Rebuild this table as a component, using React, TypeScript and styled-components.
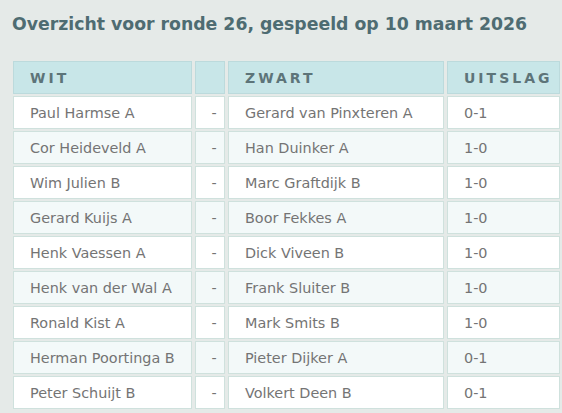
import React, { FC } from 'react'
import styled, { createGlobalStyle } from 'styled-components'

const GlobalStyle = createGlobalStyle`
  html, body {
    margin: 0;
    padding: 0;
    background: #e5eae8;
    overflow: hidden;
  }
  body {
    font-family: 'DejaVu Sans', Verdana, sans-serif;
  }
`

const Page = styled.div`
  width: 562px;
  height: 413px;
  padding-top: 13px;
  box-sizing: border-box;
`

const Title = styled.h2`
  margin: 0 0 0 12px;
  font-size: 17.3px;
  line-height: 22px;
  font-weight: bold;
  color: #4e6c72;
`

const Grid = styled.div`
  display: grid;
  grid-template-columns: 179px 30px 216px 113px;
  grid-auto-rows: 33px;
  gap: 2px 3px;
  margin: 26px 0 0 13px;
`

const HeadCell = styled.div`
  box-sizing: border-box;
  background: #c8e6e8;
  border: 1px solid #bcdadc;
  display: flex;
  align-items: center;
  padding-left: 16px;
  font-size: 14px;
  font-weight: bold;
  letter-spacing: 3px;
  color: #5d7479;
  white-space: nowrap;
  overflow: hidden;
`

const Cell = styled.div<{ $alt?: boolean; $center?: boolean }>`
  box-sizing: border-box;
  background: ${({ $alt }) => ($alt ? '#f3f9f9' : '#ffffff')};
  border: 1px solid #cfe1dd;
  display: flex;
  align-items: center;
  justify-content: ${({ $center }) => ($center ? 'center' : 'flex-start')};
  padding-left: ${({ $center }) => ($center ? '8px' : '16px')};
  font-size: 14.4px;
  color: #747474;
  white-space: nowrap;
`

const games: [string, string, string][] = [
  ['Paul Harmse A', 'Gerard van Pinxteren A', '0-1'],
  ['Cor Heideveld A', 'Han Duinker A', '1-0'],
  ['Wim Julien B', 'Marc Graftdijk B', '1-0'],
  ['Gerard Kuijs A', 'Boor Fekkes A', '1-0'],
  ['Henk Vaessen A', 'Dick Viveen B', '1-0'],
  ['Henk van der Wal A', 'Frank Sluiter B', '1-0'],
  ['Ronald Kist A', 'Mark Smits B', '1-0'],
  ['Herman Poortinga B', 'Pieter Dijker A', '0-1'],
  ['Peter Schuijt B', 'Volkert Deen B', '0-1'],
]

const App: FC = () => (
  <Page>
    <GlobalStyle />
    <Title>Overzicht voor ronde 26, gespeeld op 10 maart 2026</Title>
    <Grid>
      <HeadCell>WIT</HeadCell>
      <HeadCell />
      <HeadCell>ZWART</HeadCell>
      <HeadCell>UITSLAG</HeadCell>
      {games.map(([white, black, result], i) => (
        <React.Fragment key={white}>
          <Cell $alt={i % 2 === 1}>{white}</Cell>
          <Cell $alt={i % 2 === 1} $center>-</Cell>
          <Cell $alt={i % 2 === 1}>{black}</Cell>
          <Cell $alt={i % 2 === 1}>{result}</Cell>
        </React.Fragment>
      ))}
    </Grid>
  </Page>
)

export default App
